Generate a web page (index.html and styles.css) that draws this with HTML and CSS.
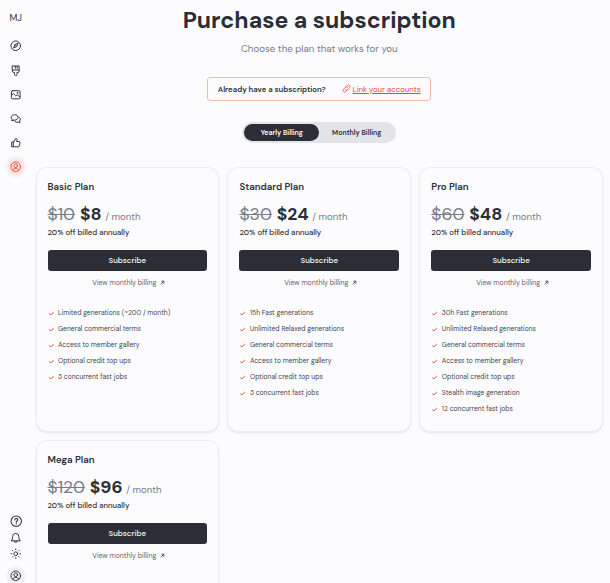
FILE: index.html
```
<!DOCTYPE html>
<html lang="en">
<head>
<meta charset="utf-8">
<title>Purchase a subscription</title>
<link rel="stylesheet" href="styles.css">
</head>
<body>
<svg class="defs" width="0" height="0">
  <symbol id="check" viewBox="0 0 8 8"><path d="M1.800 4.300 3.200 5.700 6.200 2.800"/></symbol>
  <symbol id="arrow" viewBox="0 0 8 8"><path d="M1.500 6.500 6 2M2.800 1.900H6.100V5.200"/></symbol>
  <symbol id="person" viewBox="0 0 24 24"><circle cx="12" cy="12" r="10"/><circle cx="12" cy="10" r="3.800"/><path d="M5.800 19c1.300-2.300 3.500-3.400 6.200-3.400s4.900 1.100 6.200 3.400"/></symbol>
</svg>
<div class="app">
  <nav class="sidebar">
    <div class="logo">MJ</div>
    <div class="nav">
      <a><svg viewBox="0 0 24 24"><circle cx="12" cy="12" r="10"/><path d="M16.500 7.500 14 14l-6.500 2.500L10 10zM12 11.500v1"/></svg></a>
      <a><svg viewBox="0 0 24 24"><path d="M5 2h14v11.500a2 2 0 0 1-2 2h-2.500V20a2.500 2.500 0 0 1-5 0v-4.500H7a2 2 0 0 1-2-2zM5 10.500h14M11 3v4M15 3v4"/></svg></a>
      <a><svg viewBox="0 0 24 24"><rect x="3" y="3.500" width="18" height="17" rx="2.500"/><path d="m3 13 4-3.500 5 5 3-2.500 6 5"/><circle cx="15.500" cy="8" r="1"/></svg></a>
      <a><svg viewBox="0 0 24 24"><path d="M7 15.500 3.500 16l1-3C3.200 11.700 2.500 10.300 2.500 9c0-3.300 3-5.500 7-5.500s7 2.200 7 5.500-3 6-7 6c-1 0-1.800-.1-2.500-.300"/><path d="M18.500 8.500c2 1 3 2.500 3 4.500 0 1.500-.600 2.700-1.500 3.700l1 3.300-3.500-1c-3.500 1-6.500 0-8-2"/></svg></a>
      <a><svg viewBox="0 0 24 24"><path d="M7.500 10.500 12 3c2 0 3 1.500 2.600 3.200L14 9.500h4.500a2.500 2.500 0 0 1 2.400 3l-1.400 6a2.500 2.500 0 0 1-2.500 2H10l-2.500-1zM7.500 10.500h-4v10h4"/></svg></a>
      <a class="active"><svg><use href="#person"/></svg></a>
    </div>
    <div class="tools">
      <a class="help"><svg viewBox="0 0 24 24"><circle cx="12" cy="12" r="10"/><path d="M9 9.500c0-4 6-3.800 6-.3 0 2.300-3 2.300-3 4.800M12 16.500v1"/></svg></a>
      <a><svg viewBox="0 0 24 24"><path d="M3 18c2-2 2.500-4 2.500-8.500a6.500 6.500 0 0 1 13 0c0 4.500.5 6.500 2.500 8.500zM9 18.500a3 3 0 0 0 6 0"/></svg></a>
      <a><svg viewBox="0 0 24 24"><circle cx="12" cy="12" r="4"/><path d="M12 2v1.500M12 20.500v1.500M2 12h1.500M20.500 12h1.500M5 5l1 1M18 18l1 1M5 19l1-1M18 6l1-1"/></svg></a>
      <a class="account"><svg><use href="#person"/></svg></a>
    </div>
  </nav>
  <main class="main">
    <h1><span>Purchase a subscription</span></h1>
    <p class="subtitle">Choose the plan that works for you</p>
    <div class="notice">
      <span class="question">Already have a subscription?</span>
      <a class="link"><svg viewBox="0 0 24 24"><path d="m10 8 4-4a4.200 4.200 0 0 1 6 6l-5 5a4.200 4.200 0 0 1-6 0M14 16l-4 4a4.200 4.200 0 0 1-6-6l5-5a4.200 4.200 0 0 1 6 0"/></svg><span>Link your accounts</span></a>
    </div>
    <div class="toggle"><span class="selected">Yearly Billing</span><span>Monthly Billing</span></div>
    <div class="plans">
      <section class="card">
        <h2>Basic Plan</h2>
        <div class="price"><s>$10</s><b>$8</b><span>/ month</span></div>
        <p class="note">20% off billed annually</p>
        <button>Subscribe</button>
        <a class="monthly">View monthly billing <svg><use href="#arrow"/></svg></a>
        <ul>
          <li><svg><use href="#check"/></svg>Limited generations (~200 / month)</li>
          <li><svg><use href="#check"/></svg>General commercial terms</li>
          <li><svg><use href="#check"/></svg>Access to member gallery</li>
          <li><svg><use href="#check"/></svg>Optional credit top ups</li>
          <li><svg><use href="#check"/></svg>3 concurrent fast jobs</li>
        </ul>
      </section>
      <section class="card">
        <h2>Standard Plan</h2>
        <div class="price"><s>$30</s><b>$24</b><span>/ month</span></div>
        <p class="note">20% off billed annually</p>
        <button>Subscribe</button>
        <a class="monthly">View monthly billing <svg><use href="#arrow"/></svg></a>
        <ul>
          <li><svg><use href="#check"/></svg>15h Fast generations</li>
          <li><svg><use href="#check"/></svg>Unlimited Relaxed generations</li>
          <li><svg><use href="#check"/></svg>General commercial terms</li>
          <li><svg><use href="#check"/></svg>Access to member gallery</li>
          <li><svg><use href="#check"/></svg>Optional credit top ups</li>
          <li><svg><use href="#check"/></svg>3 concurrent fast jobs</li>
        </ul>
      </section>
      <section class="card">
        <h2>Pro Plan</h2>
        <div class="price"><s>$60</s><b>$48</b><span>/ month</span></div>
        <p class="note">20% off billed annually</p>
        <button>Subscribe</button>
        <a class="monthly">View monthly billing <svg><use href="#arrow"/></svg></a>
        <ul>
          <li><svg><use href="#check"/></svg>30h Fast generations</li>
          <li><svg><use href="#check"/></svg>Unlimited Relaxed generations</li>
          <li><svg><use href="#check"/></svg>General commercial terms</li>
          <li><svg><use href="#check"/></svg>Access to member gallery</li>
          <li><svg><use href="#check"/></svg>Optional credit top ups</li>
          <li><svg><use href="#check"/></svg>Stealth image generation</li>
          <li><svg><use href="#check"/></svg>12 concurrent fast jobs</li>
        </ul>
      </section>
      <section class="card">
        <h2>Mega Plan</h2>
        <div class="price"><s>$120</s><b>$96</b><span>/ month</span></div>
        <p class="note">20% off billed annually</p>
        <button>Subscribe</button>
        <a class="monthly">View monthly billing <svg><use href="#arrow"/></svg></a>
      </section>
    </div>
  </main>
</div>
</body>
</html>
```
FILE: styles.css
```
* { box-sizing: border-box; margin: 0; padding: 0; }
body {
  font-family: "DM Sans", Inter, "Liberation Sans", sans-serif;
  background: #fcfcfe;
  color: #2b2e36;
  height: 583px;
  overflow: hidden;
}
.defs { display: block; height: 0; }
svg { fill: none; stroke: currentColor; stroke-width: 2; stroke-linecap: round; stroke-linejoin: round; flex: none; }
.app { display: flex; height: 583px; overflow: hidden; }
.sidebar { width: 31.500px; flex: none; display: flex; flex-direction: column; align-items: center; }
.sidebar svg { width: 11.500px; height: 11.500px; display: block; }
.logo { font-size: 9.300px; line-height: 12px; margin-top: 12px; letter-spacing: -0.100px; }
.nav { display: flex; flex-direction: column; margin-top: 10px; }
.nav a { display: grid; place-items: center; height: 24.200px; width: 24px; }
.nav .active { color: #e0523f; background: radial-gradient(circle closest-side, #fce4e2 55%, rgba(252, 238, 236, 0)); }
.tools { margin-top: auto; display: flex; flex-direction: column; align-items: center; }
.tools a { display: grid; place-items: center; height: 16.500px; width: 20px; }
.sidebar .help svg { width: 12.500px; height: 12.500px; }
.tools .account { height: 20px; margin-top: 3.500px; margin-bottom: -2.500px; border-radius: 50%; background: #f1f2f5; }
.main { flex: none; width: 571.500px; padding-left: 4px; display: flex; flex-direction: column; align-items: center; }
.main > * { flex: none; }
h1 { font-size: 23.100px; line-height: 30px; font-weight: 700; margin-top: 5px; white-space: nowrap; }
.subtitle { font-size: 9.700px; line-height: 14px; color: #777b88; margin-top: 7px; margin-bottom: 20.500px; }
.notice { width: 224px; height: 24.500px; border: 1px solid #f6b9b1; border-radius: 3px; padding: 0 9.500px; display: flex; align-items: center; justify-content: space-between; font-size: 7.800px; white-space: nowrap; }
.question { font-weight: 600; font-size: 7.750px; }
.link { color: #df4a32; display: flex; align-items: center; gap: 2px; }
.link span { text-decoration: underline; }
.link svg { width: 9px; height: 9px; }
.toggle { width: 154px; height: 21.500px; margin-top: 20.500px; padding: 2px; border-radius: 11px; background: #e2e4e9; display: flex; font-size: 7px; font-weight: 600; line-height: 17.500px; text-align: center; }
.toggle span { flex: 1; border-radius: 9px; }
.toggle .selected { background: #2b2e36; color: #fcfcfe; }
.plans { width: 567.500px; margin-top: 23.500px; display: grid; grid-template-columns: repeat(3, 1fr); gap: 8px 8.300px; grid-template-rows: 265px 265px; }
.card { border: 1px solid #eeeef2; border-radius: 11px; box-shadow: 0 1px 2px rgba(40, 44, 60, 0.110); padding: 12px 11px 0; background: #fcfcfe; display: flex; flex-direction: column; white-space: nowrap; }
h2 { font-size: 9.600px; line-height: 14px; font-weight: 600; }
.price { display: flex; align-items: baseline; height: 24px; line-height: 24px; margin-top: 8px; font-size: 17.500px; }
.price s { color: #777b8c; text-decoration-thickness: 1.300px; margin-right: 4.800px; }
.price b { font-weight: 700; margin-right: 3.600px; }
.price span { font-size: 9.600px; color: #777b88; }
.note { font-size: 7.700px; line-height: 14px; font-weight: 500; margin-top: -0.500px; }
button { font: 500 7.900px/21px "DM Sans", Inter, "Liberation Sans", sans-serif; height: 21px; margin-top: 10.500px; border: 0; border-radius: 3px; background: #2b2e36; color: #fcfcfe; }
.monthly { font-size: 6.950px; line-height: 16px; margin-top: 4px; padding-left: 3px; color: #5f636f; display: flex; align-items: center; justify-content: center; gap: 4px; }
.monthly svg { width: 5px; height: 5px; stroke-width: 1.200; color: #2b2e36; }
ul { list-style: none; margin-top: 14.500px; }
li { display: flex; align-items: center; gap: 3.500px; font-size: 6.750px; line-height: 16px; color: #42454f; }
li svg { width: 7px; height: 7px; stroke-width: 1.100; color: #df4a32; }
```
